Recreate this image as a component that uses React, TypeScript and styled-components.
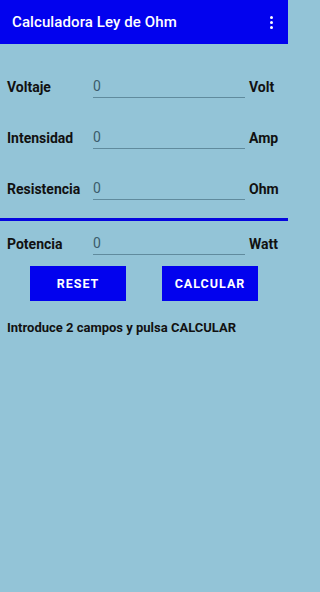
import React from 'react';
import styled, { createGlobalStyle } from 'styled-components';

const GlobalStyle = createGlobalStyle`
  html, body {
    margin: 0;
    padding: 0;
    background: #93c4d7;
  }
  body {
    font-family: Roboto, 'Liberation Sans', sans-serif;
  }
`;

const Screen = styled.div`
  width: 288px;
  min-height: 592px;
  background: #93c4d7;
  display: flex;
  flex-direction: column;
`;

const AppBar = styled.header`
  height: 44px;
  background: #0202ee;
  display: flex;
  align-items: center;
  justify-content: space-between;
  padding: 0 12px;
  box-sizing: border-box;
`;

const Title = styled.h1`
  margin: 0;
  color: #ffffff;
  font-size: 15px;
  font-weight: 500;
  letter-spacing: 0.1px;
`;

const MenuButton = styled.div`
  display: flex;
  flex-direction: column;
  gap: 2px;
  margin-right: 3px;

  span {
    width: 3px;
    height: 3px;
    border-radius: 50%;
    background: #ffffff;
  }
`;

const Form = styled.div`
  padding-top: 17px;
  display: flex;
  flex-direction: column;
`;

const Row = styled.div<{ $height: number }>`
  height: ${p => p.$height}px;
  display: grid;
  grid-template-columns: 86px 152px auto;
  align-items: center;
  padding-left: 7px;
`;

const Label = styled.label`
  font-size: 14px;
  font-weight: 700;
  color: #111;
  white-space: nowrap;
`;

const Field = styled.input`
  width: 100%;
  box-sizing: border-box;
  background: transparent;
  border: none;
  border-bottom: 1.5px solid #608b9d;
  font-family: Roboto, 'Liberation Sans', sans-serif;
  font-size: 14px;
  color: #3b5c6b;
  padding: 3px 0;
  margin: 0;
  outline: none;
`;

const Unit = styled.span`
  font-size: 14px;
  font-weight: 700;
  color: #111;
  padding-left: 4px;
`;

const Divider = styled.div`
  height: 3px;
  background: #0505df;
  margin-top: 4px;
`;

const Buttons = styled.div`
  display: flex;
  justify-content: center;
  gap: 36px;
`;

const ActionButton = styled.button`
  width: 96px;
  height: 35px;
  border: none;
  background: #0202ee;
  color: #ffffff;
  font-family: Roboto, 'Liberation Sans', sans-serif;
  font-size: 12.5px;
  font-weight: 700;
  letter-spacing: 1px;
  text-transform: uppercase;
`;

const Hint = styled.p`
  margin: 19px 0 0 7px;
  font-size: 13px;
  font-weight: 700;
  color: #111;
  line-height: 16px;
`;

const fields = [
  { label: 'Voltaje', unit: 'Volt' },
  { label: 'Intensidad', unit: 'Amp' },
  { label: 'Resistencia', unit: 'Ohm' },
];

export default function App() {
  return (
    <Screen>
      <GlobalStyle />
      <AppBar>
        <Title>Calculadora Ley de Ohm</Title>
        <MenuButton>
          <span />
          <span />
          <span />
        </MenuButton>
      </AppBar>
      <Form>
        {fields.map(f => (
          <Row key={f.label} $height={51}>
            <Label>{f.label}</Label>
            <Field defaultValue="0" />
            <Unit>{f.unit}</Unit>
          </Row>
        ))}
        <Divider />
        <Row $height={45}>
          <Label>Potencia</Label>
          <Field defaultValue="0" />
          <Unit>Watt</Unit>
        </Row>
        <Buttons>
          <ActionButton>Reset</ActionButton>
          <ActionButton>Calcular</ActionButton>
        </Buttons>
        <Hint>Introduce 2 campos y pulsa CALCULAR</Hint>
      </Form>
    </Screen>
  );
}
